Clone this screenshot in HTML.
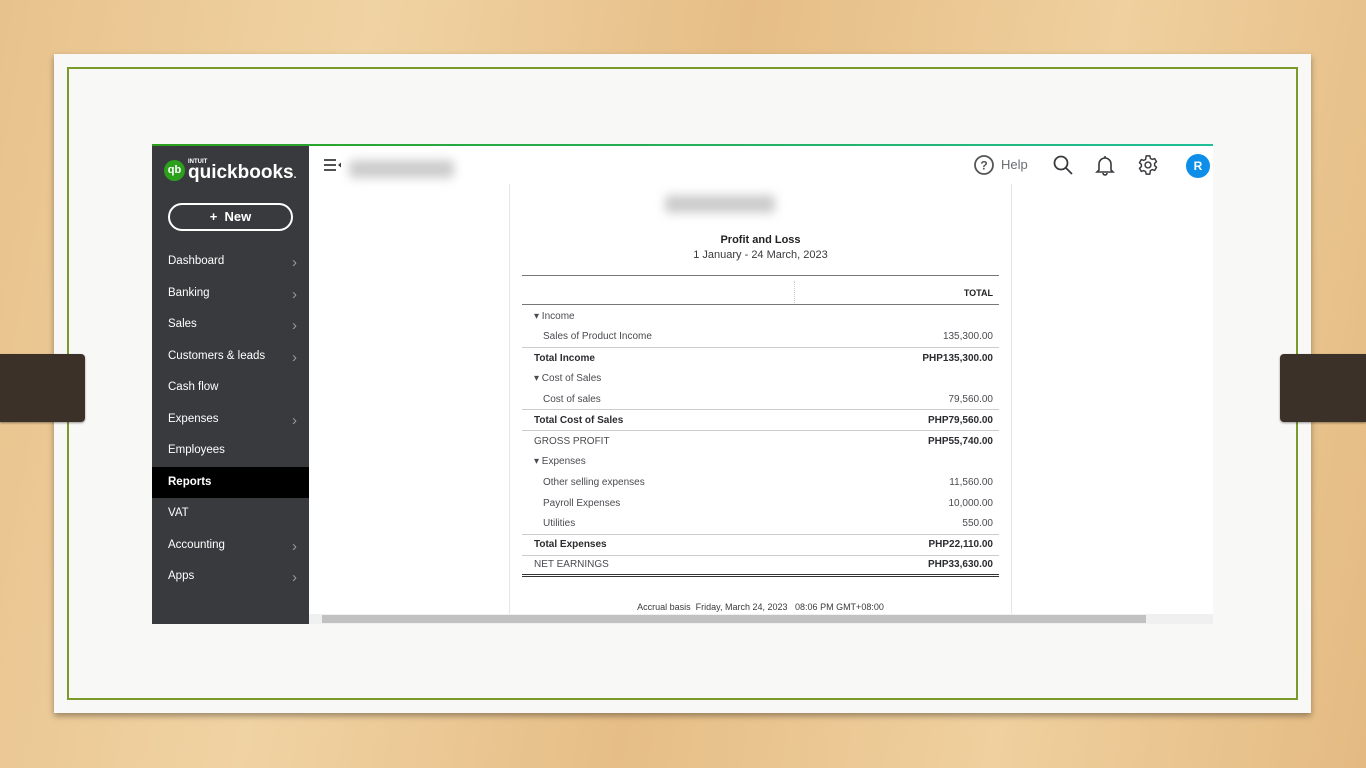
<!DOCTYPE html>
<html><head><style>
*{margin:0;padding:0;box-sizing:border-box}
body{width:1366px;height:768px;overflow:hidden;position:relative;font-family:"Liberation Sans",sans-serif;background:linear-gradient(100deg,#e8c28c 0%,#f0d3a3 25%,#e6bd86 50%,#efd09e 75%,#e4ba82 100%)}
.paper{position:absolute;left:54px;top:54px;width:1257px;height:659px;background:#f8f8f7;box-shadow:0 3px 6px rgba(0,0,0,.35)}
.frame{position:absolute;left:67px;top:67px;width:1231px;height:633px;border:2px solid #7a9a2a}
.tab{position:absolute;top:354px;height:68px;background:#3b3129;box-shadow:0 1px 2px rgba(0,0,0,.4)}
.app{position:absolute;left:152px;top:144px;width:1061px;height:480px;background:#fff;overflow:hidden}
.topline{position:absolute;left:0;top:0;width:100%;height:2px;background:linear-gradient(90deg,#2ca01c,#1fbf9a)}
.side{position:absolute;left:0;top:2px;width:157px;height:478px;background:#393a3d;color:#fff}
.logo{position:absolute;left:12px;top:13px;display:flex;align-items:center}
.qb{width:21px;height:21px;border-radius:50%;background:#2ca01c;color:#fff;font-size:11px;font-weight:bold;text-align:center;line-height:21px}
.newbtn{position:absolute;left:16px;top:57px;width:125px;height:28px;border:2px solid #fff;border-radius:14px;text-align:center;font-size:13px;font-weight:bold;line-height:24px}
.nav{position:absolute;left:0;top:100px;width:157px}
.nav div{height:31.5px;line-height:31.5px;padding-left:16px;font-size:11.5px;position:relative}
.nav div.ch:after{content:"›";position:absolute;right:12px;top:1px;color:#999;font-size:15px}
.nav div.act{background:#000;font-weight:bold}
.main{position:absolute;left:157px;top:2px;right:0;bottom:0;background:#fff}
.report{position:absolute;left:200px;top:38px;width:503px;height:430px;border-left:1px solid #e6e6e6;border-right:1px solid #e6e6e6}
.blur{background:#ccc;filter:blur(5px);border-radius:4px;position:absolute}
table{position:absolute;left:12px;width:477px;border-collapse:collapse;font-size:10px;color:#4a4b50}
td{height:20.75px;padding:0 6px 0 12px}
td.r{text-align:right}
.b{font-weight:bold;color:#2b2c30}
.ln td{border-top:1px solid #ccc}
.scroll{position:absolute;left:0;bottom:0;width:904px;height:10px;background:#f0f0f0}
</style></head><body>
<div class="paper"></div><div class="frame"></div>
<div class="tab" style="left:0;width:85px;border-radius:0 4px 4px 0"></div>
<div class="tab" style="left:1280px;width:86px;border-radius:4px 0 0 4px"></div>
<div class="app">
<div class="topline"></div>
<div class="side">
 <div class="logo"><div class="qb">qb</div><div style="margin-left:3px;line-height:1"><div style="font-size:6px;font-weight:bold">INTUIT</div><div style="font-size:19px;font-weight:bold;margin-top:-2px">quickbooks<span style="font-size:10px">.</span></div></div></div>
 <div class="newbtn">+&nbsp;&nbsp;New</div>
 <div class="nav">
  <div class="ch">Dashboard</div><div class="ch">Banking</div><div class="ch">Sales</div><div class="ch">Customers &amp; leads</div><div>Cash flow</div><div class="ch">Expenses</div><div>Employees</div><div class="act">Reports</div><div>VAT</div><div class="ch">Accounting</div><div class="ch">Apps</div>
 </div>
</div>
<div class="main">
 <svg style="position:absolute;left:14px;top:12px" width="20" height="14"><path d="M1 2h12M1 7h12M1 12h12" stroke="#393a3d" stroke-width="1.8"/><path d="M18 4.5l-3 2.5 3 2.5z" fill="#393a3d"/></svg>
 <div class="blur" style="left:40px;top:14px;width:105px;height:18px"></div>
 <svg style="position:absolute;left:664px;top:8px" width="22" height="22"><circle cx="11" cy="11" r="9" fill="none" stroke="#555" stroke-width="1.8"/><text x="11" y="15.5" font-size="12" font-weight="bold" text-anchor="middle" fill="#555" font-family="Liberation Sans">?</text></svg>
 <div style="position:absolute;left:692px;top:11px;font-size:13px;color:#6b6c72">Help</div>
 <svg style="position:absolute;left:743px;top:8px" width="22" height="22"><circle cx="9" cy="9" r="6.5" fill="none" stroke="#393a3d" stroke-width="1.8"/><path d="M14 14l6 6" stroke="#393a3d" stroke-width="1.8"/></svg>
 <svg style="position:absolute;left:786px;top:8px" width="20" height="22"><path d="M4 16V10a6 6 0 0 1 12 0v6l2 2H2z" fill="none" stroke="#393a3d" stroke-width="1.6"/><path d="M8 19a2 2 0 0 0 4 0" fill="none" stroke="#393a3d" stroke-width="1.6"/><path d="M10 2v2" stroke="#393a3d" stroke-width="1.6"/></svg>
 <svg style="position:absolute;left:828px;top:8px" width="22" height="22" viewBox="0 0 24 24"><path d="M10 2h4l.6 2.8 2 1.1 2.7-.9 2 3.4-2.1 1.9v2.3l2.1 1.9-2 3.4-2.7-.9-2 1.1L14 22h-4l-.6-2.8-2-1.1-2.7.9-2-3.4 2.1-1.9v-2.3L2.7 9.5l2-3.4 2.7.9 2-1.1z" fill="none" stroke="#393a3d" stroke-width="1.6" stroke-linejoin="round"/><circle cx="12" cy="12" r="3.2" fill="none" stroke="#393a3d" stroke-width="1.6"/></svg>
 <div style="position:absolute;left:877px;top:8px;width:24px;height:24px;border-radius:50%;background:#0d8ee8;color:#fff;font-size:12px;font-weight:bold;text-align:center;line-height:24px">R</div>
 <div class="report">
  <div class="blur" style="left:155px;top:11px;width:110px;height:18px"></div>
  <div style="position:absolute;left:0;width:100%;top:50px;text-align:center;font-size:11px;font-weight:bold;color:#222">Profit and Loss</div>
  <div style="position:absolute;left:0;width:100%;top:65px;text-align:center;font-size:11px;color:#393a3d">1 January - 24 March, 2023</div>
  <div style="position:absolute;left:12px;top:91px;width:477px;border-top:1px solid #777"></div>
  <div style="position:absolute;left:284px;top:97px;height:22px;border-left:1px dotted #ccc"></div>
  <div style="position:absolute;right:18px;top:104px;font-size:9px;font-weight:bold;color:#222">TOTAL</div>
  <div style="position:absolute;left:12px;top:120px;width:477px;border-top:1px solid #777"></div>
  <table style="top:122px">
   <tr><td>▾ Income</td><td></td></tr>
   <tr><td style="padding-left:21px">Sales of Product Income</td><td class="r">135,300.00</td></tr>
   <tr class="ln b"><td>Total Income</td><td class="r">PHP135,300.00</td></tr>
   <tr><td>▾ Cost of Sales</td><td></td></tr>
   <tr><td style="padding-left:21px">Cost of sales</td><td class="r">79,560.00</td></tr>
   <tr class="ln b"><td>Total Cost of Sales</td><td class="r">PHP79,560.00</td></tr>
   <tr class="ln"><td>GROSS PROFIT</td><td class="r b">PHP55,740.00</td></tr>
   <tr><td>▾ Expenses</td><td></td></tr>
   <tr><td style="padding-left:21px">Other selling expenses</td><td class="r">11,560.00</td></tr>
   <tr><td style="padding-left:21px">Payroll Expenses</td><td class="r">10,000.00</td></tr>
   <tr><td style="padding-left:21px">Utilities</td><td class="r">550.00</td></tr>
   <tr class="ln b"><td>Total Expenses</td><td class="r">PHP22,110.00</td></tr>
   <tr class="ln"><td style="border-bottom:3px double #333">NET EARNINGS</td><td class="r b" style="border-bottom:3px double #333">PHP33,630.00</td></tr>
  </table>
  <div style="position:absolute;left:0;width:100%;top:418px;text-align:center;font-size:9px;color:#393a3d">Accrual basis&nbsp; Friday, March 24, 2023&nbsp;&nbsp; 08:06 PM GMT+08:00</div>
 </div>
 <div class="scroll"><div style="position:absolute;left:13px;top:1px;width:824px;height:8px;background:#c1c1c1"></div></div>
</div>
</div>
</body></html>
